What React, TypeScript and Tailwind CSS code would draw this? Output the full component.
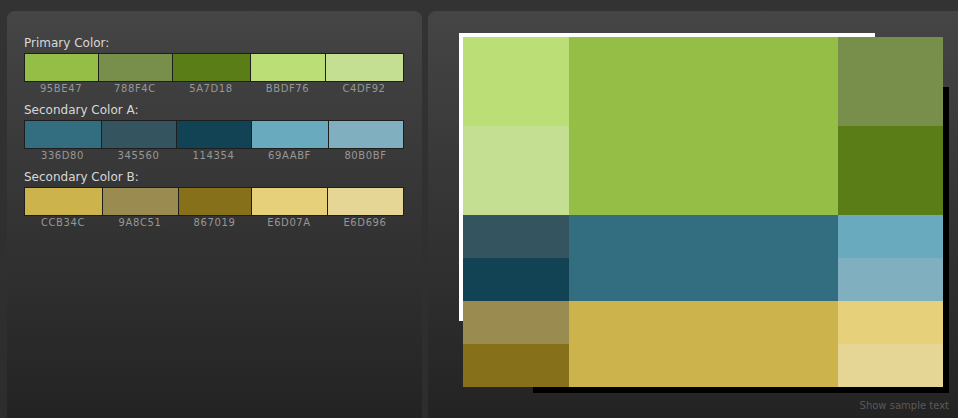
import React from "react";

type Sw = { hex: string; w: number };

const groups: { title: string; items: Sw[] }[] = [
  {
    title: "Primary Color:",
    items: [
      { hex: "95BE47", w: 74 },
      { hex: "788F4C", w: 74 },
      { hex: "5A7D18", w: 78 },
      { hex: "BBDF76", w: 75 },
      { hex: "C4DF92", w: 78 },
    ],
  },
  {
    title: "Secondary Color A:",
    items: [
      { hex: "336D80", w: 77 },
      { hex: "345560", w: 75 },
      { hex: "114354", w: 75 },
      { hex: "69AABF", w: 77 },
      { hex: "80B0BF", w: 75 },
    ],
  },
  {
    title: "Secondary Color B:",
    items: [
      { hex: "CCB34C", w: 78 },
      { hex: "9A8C51", w: 76 },
      { hex: "867019", w: 73 },
      { hex: "E6D07A", w: 76 },
      { hex: "E6D696", w: 76 },
    ],
  },
];

export default function App() {
  return (
    <div
      className="w-[958px] h-[418px] overflow-hidden flex gap-[6px] pt-[11px] pl-[7px] bg-[linear-gradient(#333333,#2d2d2d)]"
      style={{ fontFamily: '"DejaVu Sans", Verdana, sans-serif' }}
    >
      {/* Left panel */}
      <div className="w-[415px] h-[420px] shrink-0 rounded-t-[8px] bg-[linear-gradient(#454545,#222222)] pl-[17px] pt-[25px] flex flex-col">
        {groups.map((g) => (
          <div key={g.title} className="flex flex-col mb-[8px]">
            <div className="text-[12px] leading-[14px] text-[#d8d8d8]">{g.title}</div>
            <div className="mt-[3px] flex w-fit border-y border-r border-[#1e1e1e]">
              {g.items.map((s) => (
                <div
                  key={s.hex}
                  className="h-[27px] border-l border-[#1e1e1e]"
                  style={{ width: s.w, backgroundColor: "#" + s.hex }}
                />
              ))}
            </div>
            <div className="mt-[1px] flex">
              {g.items.map((s) => (
                <div
                  key={s.hex}
                  className="text-center text-[10px] leading-[12px] tracking-[0.6px] text-[#979797]"
                  style={{ width: s.w }}
                >
                  {s.hex}
                </div>
              ))}
            </div>
          </div>
        ))}
      </div>

      {/* Right panel */}
      <div className="w-[560px] h-[420px] shrink-0 rounded-t-[8px] bg-[linear-gradient(#454545,#222222)]">
        <div className="w-[521px] flex flex-col">
          <div className="relative ml-[35px] mt-[26px] w-[480px] h-[350px]">
            <div className="absolute left-[-4px] top-[-4px] w-[416px] h-[288px] bg-white" />
            <div className="absolute left-[70px] top-[50px] w-[416px] h-[306px] bg-black" />
            <div className="relative grid grid-cols-[106px_269px_105px] grid-rows-[89px_89px_43px_43px_43px_43px] w-[480px] h-[350px]">
              <div className="bg-[#BBDF76]" />
              <div className="row-span-2 bg-[#95BE47]" />
              <div className="bg-[#788F4C]" />
              <div className="bg-[#C4DF92]" />
              <div className="bg-[#5A7D18]" />

              <div className="bg-[#345560]" />
              <div className="row-span-2 bg-[#336D80]" />
              <div className="bg-[#69AABF]" />
              <div className="bg-[#114354]" />
              <div className="bg-[#80B0BF]" />

              <div className="bg-[#9A8C51]" />
              <div className="row-span-2 bg-[#CCB34C]" />
              <div className="bg-[#E6D07A]" />
              <div className="bg-[#867019]" />
              <div className="bg-[#E6D696]" />
            </div>
          </div>
          <div className="mt-[12px] text-right text-[10px] leading-[13px] text-[#5a5a5a]">
            Show sample text
          </div>
        </div>
      </div>
    </div>
  );
}
